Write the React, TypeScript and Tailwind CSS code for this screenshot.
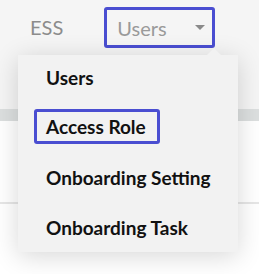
import React from "react";

const menuItems = ["Users", "Access Role", "Onboarding Setting", "Onboarding Task"];

const App: React.FC = () => {
    const highlighted = "Access Role";

    return (
        <div className="relative w-[259px] h-[274px] overflow-hidden bg-white font-['Lato',sans-serif]">
            {/* Top bar */}
            <div className="h-[109px] bg-[#f5f5f5] flex items-start pl-[30px] pt-[7px]">
                <span className="h-[41px] leading-[41px] text-[20px] text-[#8c8c8c]">ESS</span>
                <button className="ml-[41px] h-[41px] w-[111px] border-[3px] border-[#4a4ed1] rounded-[3px] flex items-center justify-between pl-[10px] pr-[7px]">
                    <span className="text-[20px] text-[#9a9a9a] leading-[24px]">Users</span>
                    <svg width="10" height="5" viewBox="0 0 10 5">
                        <path d="M0 0 L10 0 L5 5 Z" fill="#8a8a8a" />
                    </svg>
                </button>
            </div>
            <div className="h-[12px] bg-[#dcdfdf]"></div>
            <div className="h-[81px]"></div>
            <div className="h-[2px] bg-[#e6e6e6]"></div>

            {/* Dropdown */}
            <div className="absolute left-[18px] top-[55px] w-[220px] h-[197px] bg-[#f2f2f2] shadow-[0_4px_24px_rgba(0,0,0,0.16)]">
                <div className="absolute right-[17px] top-[-7px] w-0 h-0 border-l-[7px] border-r-[7px] border-b-[7px] border-l-transparent border-r-transparent border-b-[#f2f2f2]"></div>
                {menuItems.map((item) =>
                    item === highlighted ? (
                        <div key={item} className="h-[50px] pt-[4px] pl-[16px]">
                            <span className="inline-block border-[3px] border-[#4a4ed1] rounded-[3px] pl-[9px] pr-[11px] leading-[29px] text-[19px] font-bold text-[#111]">
                                {item}
                            </span>
                        </div>
                    ) : (
                        <div key={item} className="h-[50px] pl-[28px] leading-[46px] text-[19px] font-bold text-[#111]">
                            {item}
                        </div>
                    )
                )}
            </div>
        </div>
    );
};

export default App;
